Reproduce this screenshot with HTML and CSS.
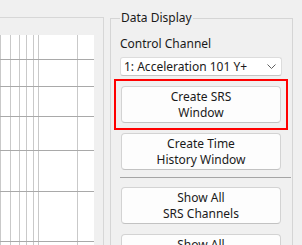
FILE: index.html
```html
<!DOCTYPE html>
<html lang="en">
<head>
    <meta charset="UTF-8">
    <meta name="viewport" content="width=device-width, initial-scale=1.0">
    <title>Data Display</title>
    <link rel="stylesheet" href="styles.css">
</head>
<body>

<div class="app">
    <div class="plot-frame">
        <div class="plot">
            <svg class="grid" width="94" height="210" viewBox="0 0 94 210">
                <g stroke="#c9c9c9" stroke-width="1">
                    <line x1="0.5" y1="0" x2="0.5" y2="210"/>
                    <line x1="10.5" y1="0" x2="10.5" y2="210"/>
                    <line x1="19.5" y1="0" x2="19.5" y2="210"/>
                    <line x1="26.5" y1="0" x2="26.5" y2="210"/>
                    <line x1="33.5" y1="0" x2="33.5" y2="210"/>
                    <line x1="38.5" y1="0" x2="38.5" y2="210"/>
                    <line x1="77.5" y1="0" x2="77.5" y2="210"/>
                </g>
                <g stroke="#a9a9a9" stroke-width="1">
                    <line x1="0" y1="24.5" x2="94" y2="24.5"/>
                    <line x1="0" y1="51.5" x2="94" y2="51.5"/>
                    <line x1="0" y1="81.5" x2="94" y2="81.5"/>
                    <line x1="0" y1="115.5" x2="94" y2="115.5"/>
                    <line x1="0" y1="156.5" x2="94" y2="156.5"/>
                    <line x1="0" y1="206.5" x2="94" y2="206.5"/>
                </g>
            </svg>
        </div>
    </div>

    <fieldset class="display-group">
        <legend>Data Display</legend>

        <label class="field-label">Control Channel</label>
        <div class="combo">
            <span>1: Acceleration 101 Y+</span>
            <svg class="chevron" width="9" height="5" viewBox="0 0 9 5">
                <path d="M0.5 0.5 L4.5 4.5 L8.5 0.5" fill="none" stroke="#606060" stroke-width="1"/>
            </svg>
        </div>

        <div class="highlight">
            <button class="action">Create SRS<br>Window</button>
        </div>
        <button class="action spaced">Create Time<br>History Window</button>

        <hr class="divider">

        <button class="action">Show All<br>SRS Channels</button>
        <button class="action spaced">Show All<br>Time Histories</button>
    </fieldset>
</div>

</body>
</html>
```

FILE: styles.css
```css
body {
    margin: 0;
    background: #f0f0f0;
    font-family: "Noto Sans", sans-serif;
    font-size: 12px;
    color: #1a1a1a;
    overflow: hidden;
}

.app {
    display: flex;
    align-items: flex-start;
}

/* chart panel on the left */
.plot-frame {
    box-sizing: border-box;
    width: 104px;
    height: 240px;
    margin-top: 17px;
    padding: 17px 9px 0 0;
    border-top: 1px solid #d7d7d7;
    border-right: 1px solid #d7d7d7;
}
.plot {
    height: 220px;
    background: #fff;
}
.grid {
    display: block;
}

/* group box */
.display-group {
    width: 162px;
    min-width: 0;
    margin: 10px 0 0 6px;
    padding: 10px 10px 0 9px;
    border: 1px solid #d5d5d5;
}
.display-group legend {
    padding: 0 1px;
    line-height: 16px;
}

.field-label {
    display: block;
    line-height: 16px;
    margin-bottom: 5px;
}

.combo {
    box-sizing: border-box;
    height: 19px;
    display: flex;
    align-items: center;
    justify-content: space-between;
    padding: 0 5px 0 3px;
    background: #fff;
    border: 1px solid #dcdcdc;
    border-bottom-color: #c4c4c4;
    border-radius: 3px;
}
.chevron {
    display: block;
}

.action {
    display: block;
    box-sizing: border-box;
    width: 160px;
    height: 37px;
    margin: 0 1px;
    padding: 0;
    font: inherit;
    line-height: 16px;
    color: #1a1a1a;
    background: #fdfdfd;
    border: 1px solid #d3d3d3;
    border-bottom-color: #c2c2c2;
    border-radius: 4px;
}
.spaced {
    margin-top: 10px;
}

.highlight {
    position: relative;
    margin-top: 10px;
}
.highlight::after {
    content: "";
    position: absolute;
    top: -7px;
    left: -6px;
    right: -6px;
    bottom: -7px;
    border: 2px solid #f00;
    pointer-events: none;
}

.divider {
    margin: 7px -9px 9px 0;
    border: none;
    border-top: 1px solid #a5a5a5;
    height: 0;
}
```
